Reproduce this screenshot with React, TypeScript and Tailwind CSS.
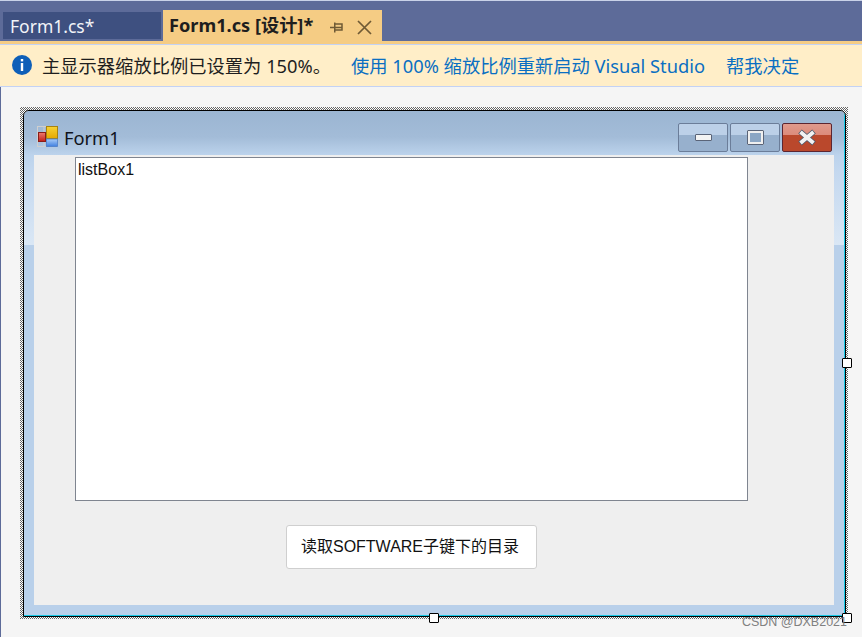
const uiFont = "font-['Noto_Sans','Noto_Sans_CJK_SC',sans-serif]";

function Handle({ className }: { className: string }) {
  return <div className={`absolute w-[10px] h-[10px] bg-white border border-black rounded-[1px] ${className}`} />;
}

function FormIcon() {
  return (
    <svg width="21" height="21" viewBox="0 0 21 21" className="shrink-0 mt-[3px]">
      <defs>
        <linearGradient id="yellow" x1="0" y1="0" x2="0" y2="1">
          <stop offset="0" stopColor="#f7d234" />
          <stop offset="1" stopColor="#e6a800" />
        </linearGradient>
        <linearGradient id="blue" x1="0" y1="0" x2="0" y2="1">
          <stop offset="0" stopColor="#a9ccf7" />
          <stop offset="1" stopColor="#3f7fe0" />
        </linearGradient>
        <linearGradient id="red" x1="0" y1="0" x2="0" y2="1">
          <stop offset="0" stopColor="#ee7b70" />
          <stop offset="1" stopColor="#c21f17" />
        </linearGradient>
      </defs>
      <rect x="0.5" y="0.5" width="20" height="20" fill="none" stroke="#cfcfcf" />
      <path d="M7 0v21M14 0v6M0 7h9" stroke="#cfcfcf" fill="none" />
      <rect x="9.5" y="0.5" width="11" height="12" fill="url(#yellow)" stroke="#a8830f" />
      <rect x="9.5" y="13" width="11" height="7.5" fill="url(#blue)" stroke="#4b7dc9" strokeWidth="0.8" />
      <rect x="1.5" y="6.5" width="7" height="9" fill="url(#red)" stroke="#8a1c18" />
    </svg>
  );
}

function CaptionButton({ children, close }: { children: React.ReactNode; close?: boolean }) {
  return (
    <div
      className={`w-[50px] h-[29px] rounded-[2px] border flex items-center justify-center ${
        close
          ? 'border-[#5c2530] bg-[linear-gradient(#e09a8c_0,#dc8a7a_42%,#ba482c_42%,#ba482c_100%)]'
          : 'border-[#6b7d99] bg-[linear-gradient(#bcd0e8_0,#bcd0e8_42%,#97b0cd_42%,#97b0cd_100%)]'
      }`}
    >
      {children}
    </div>
  );
}

export default function App() {
  return (
    <div className={`relative w-[862px] h-[637px] overflow-hidden bg-[#f5f5f5] ${uiFont}`}>
      {/* tab strip */}
      <div className="h-[41px] border-t border-[#c9d2e8] bg-[#5d6b99] flex items-end pl-[3px]">
        <div className="w-[158px] h-[27px] mb-[2px] bg-[#3e5080] text-[#f2f4f8] text-[17.5px] leading-[28px] pl-[7px]">Form1.cs*</div>
        <div className="ml-[2px] w-[219px] h-[31px] bg-[#f5cc84] flex items-center pl-[6px] text-[#1e1e1e]">
          <span className="text-[18.2px] font-bold leading-[26px] mb-[1px]">Form1.cs [设计]*</span>
          <svg width="13" height="11" viewBox="0 0 13 11" className="ml-[17px] mt-[4px]" fill="none" stroke="#6f5a35" strokeWidth="1.5">
            <path d="M0 5.5h5M4.75 0.5v10M5 2h7v6h-7M5 5.5h7" />
          </svg>
          <svg width="15" height="15" viewBox="0 0 15 15" className="ml-[14px] mt-[4px]" fill="none" stroke="#6f5a35" strokeWidth="1.7">
            <path d="M1 1l13 13M14 1L1 14" />
          </svg>
        </div>
      </div>
      <div className="h-[3px] bg-[#f5cc84]" />

      {/* info bar */}
      <div className="h-[43px] border-y-[1.5px] border-[#c3d2f5] bg-[#ffeec8] flex items-center pl-[12px] text-[18.3px] text-[#1e1e1e]">
        <div className="w-[20px] h-[20px] mb-[1px] rounded-full bg-[#0e5fb8] flex items-center justify-center shrink-0">
          <svg width="4" height="12" viewBox="0 0 4 12" fill="white">
            <rect x="0.8" y="0" width="2.4" height="2.4" />
            <rect x="0.8" y="4" width="2.4" height="8" />
          </svg>
        </div>
        <span className="ml-[10px]">主显示器缩放比例已设置为 150%。</span>
        <span className="ml-[20px] text-[#0a6fc2]">使用 100% 缩放比例重新启动 Visual Studio</span>
        <span className="ml-[21px] text-[#0a6fc2]">帮我决定</span>
      </div>

      {/* designer surface */}
      <div className="pl-[19px] pt-[20px] border-l border-[#5d6b99] h-[550px]">
        <div className="relative w-[828px] h-[512px] pl-[3px] pt-[3px] pr-[2px] pb-[2px] bg-[repeating-conic-gradient(#666666_0_25%,#ffffff_0_50%)] bg-[length:2px_2px]">
          <div className="h-full rounded-t-[6px] border border-black overflow-hidden">
            <div className="h-full border-r border-b border-[#14c8e6] bg-[linear-gradient(#9bb5d2_0,#a3bcd8_26px,#bcd3ec_44px,#c4d8ef_60px,#dae7f5_134px,#b9d0ea_134px)]">
              <div className="h-[44px] flex items-start pl-[13px] pr-[12px] pt-[12px]">
                <FormIcon />
                <span className="ml-[6px] text-[18.3px] leading-[29px] text-[#10131c]">Form1</span>
                <div className="ml-auto flex gap-[2px]">
                  <CaptionButton>
                    <div className="w-[17px] h-[7px] bg-[#f3f3f3] border border-[#5a6478] rounded-[1px]" />
                  </CaptionButton>
                  <CaptionButton>
                    <div className="w-[17px] h-[15px] bg-[#8ba6c4] border-[3px] border-[#efefef] outline outline-1 -outline-offset-1 outline-[#5a6478] rounded-[1px]" />
                  </CaptionButton>
                  <CaptionButton close>
                    <svg width="20" height="17" viewBox="0 0 20 17">
                      <path d="M3 2.5L17 14.5M17 2.5L3 14.5" stroke="#4f5a6c" strokeWidth="5.5" />
                      <path d="M3.5 3L16.5 14M16.5 3L3.5 14" stroke="#f2f2f2" strokeWidth="3.8" />
                    </svg>
                  </CaptionButton>
                </div>
              </div>
              <div className="ml-[10px] w-[800px] h-[450px] bg-[#efefef] pl-[41px] pt-[2px] font-['Liberation_Sans','Noto_Sans_CJK_SC',sans-serif] text-[#111]">
                <div className="w-[673px] h-[344px] bg-white border border-[#7f8590] pl-[2px] text-[16px] leading-[24px]">listBox1</div>
                <div className="ml-[211px] mt-[24px] w-[251px] h-[44px] pr-[3px] bg-white border border-[#cfcfcf] rounded-[3px] flex items-center justify-center text-[16px]">
                  读取SOFTWARE子键下的目录
                </div>
              </div>
            </div>
          </div>
          <Handle className="right-[-4px] top-[251px]" />
          <Handle className="left-[409px] bottom-[-4px]" />
          <Handle className="right-[-4px] bottom-[-4px]" />
        </div>
      </div>

      {/* watermark */}
      <div className="absolute right-[15px] bottom-[7px] text-[12.5px] leading-[16px] text-[#808080] font-['Liberation_Sans',sans-serif]">CSDN @DXB2021</div>
    </div>
  );
}
